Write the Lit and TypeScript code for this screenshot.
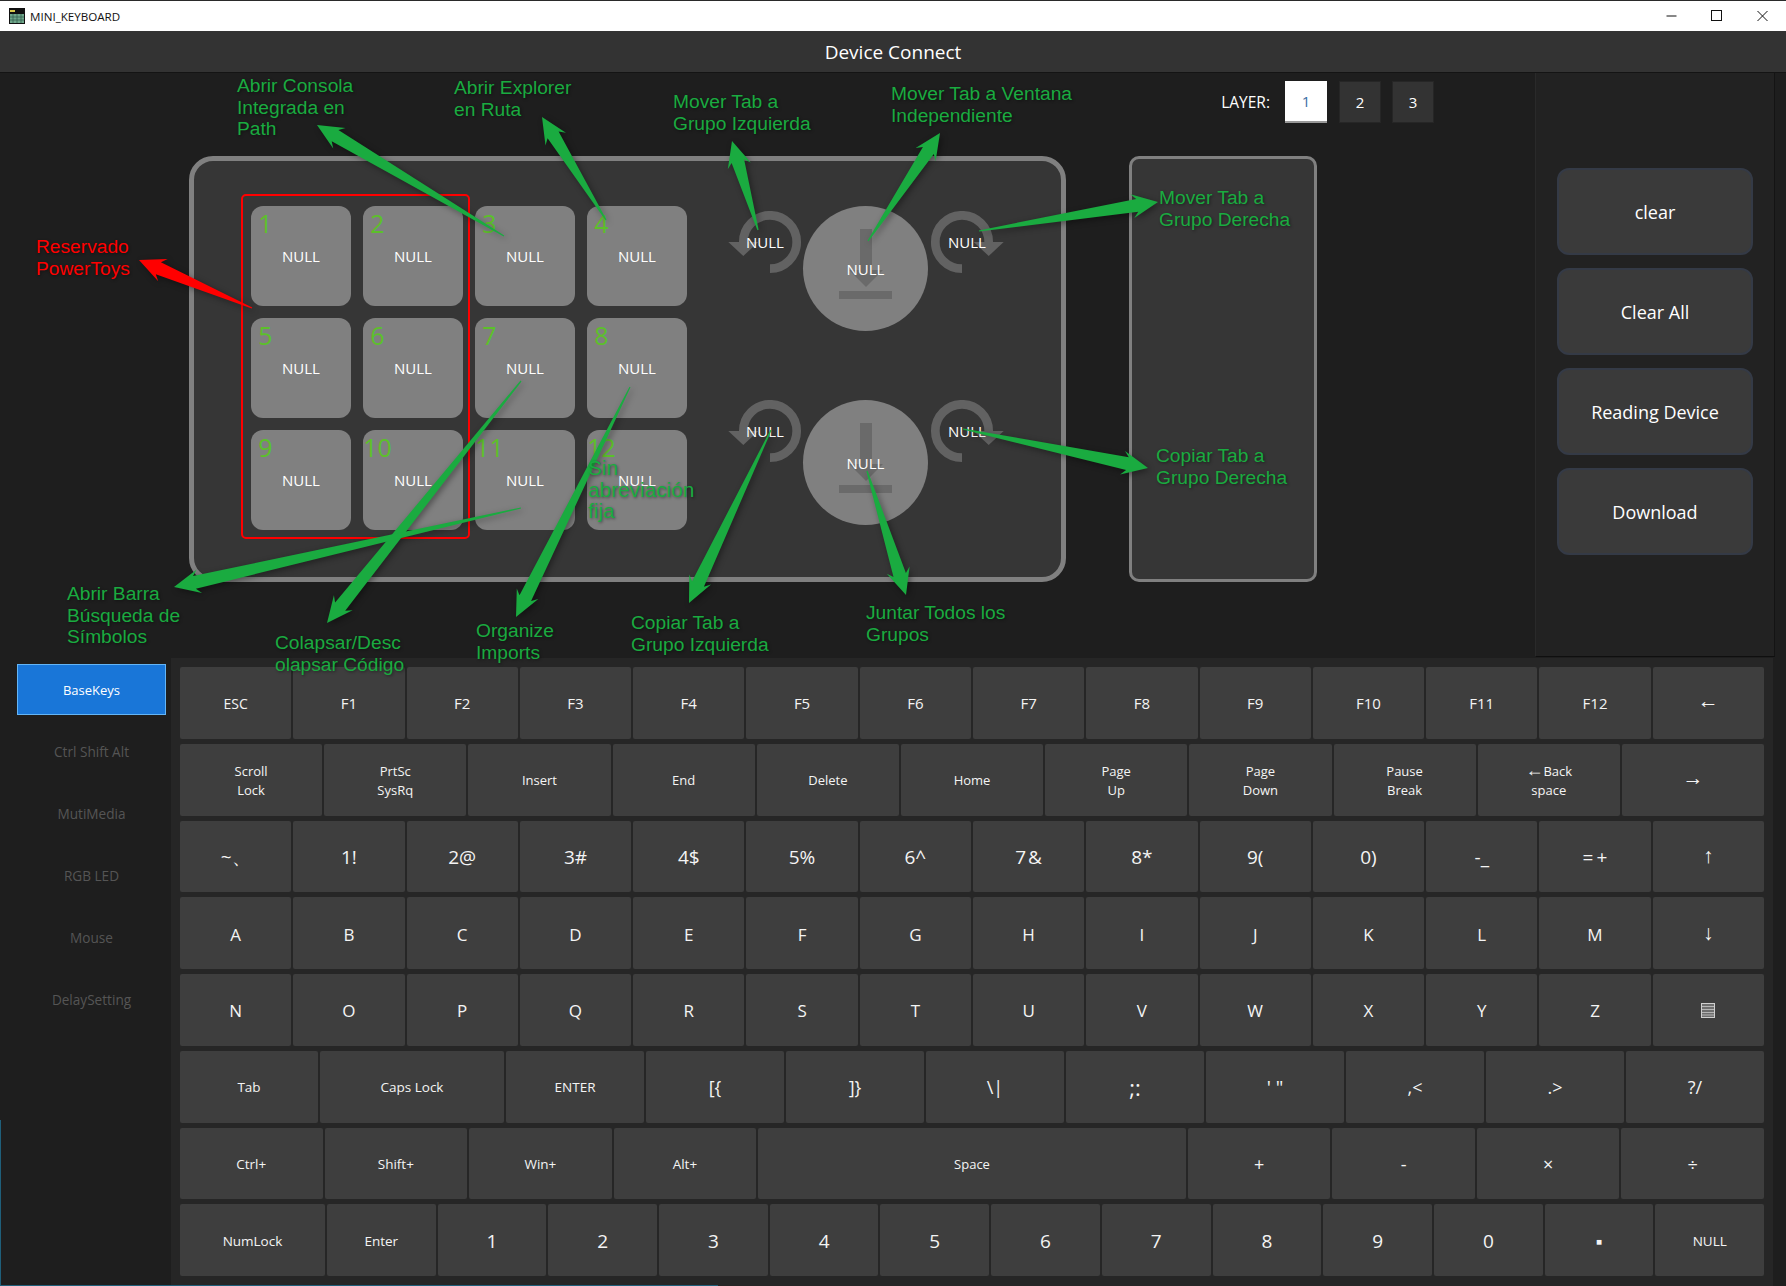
import { LitElement, html, css, svg } from "lit"
import { customElement } from "lit/decorators.js"

type Key = { t: string; s?: number; f?: number; lift?: number }

const F = (names: string[], s: number, f = 1): Key[] => names.map((t) => ({ t, s, f }))

const ROWS: Key[][] = [
  [{ t: "ESC", s: 14 }, ...F(["F1", "F2", "F3", "F4", "F5", "F6", "F7", "F8", "F9", "F10", "F11", "F12"], 15), { t: "←", s: 21, lift: 5 }],
  [
    ...F(["Scroll\nLock", "PrtSc\nSysRq", "Insert", "End", "Delete", "Home", "Page\nUp", "Page\nDown", "Pause\nBreak", "←Back\nspace"], 13),
    { t: "→", s: 21, lift: 5 },
  ],
  [
    ...F(["~、", "1!", "2@", "3#", "4$", "5%", "6^", "7\u200a&", "8*", "9(", "0)", "-_", "=\u2009+"], 19),
    { t: "↑", s: 21, lift: 1 },
  ],
  [...F(["A", "B", "C", "D", "E", "F", "G", "H", "I", "J", "K", "L", "M"], 17), { t: "↓", s: 21, lift: 1 }],
  F(["N", "O", "P", "Q", "R", "S", "T", "U", "V", "W", "X", "Y", "Z", "menu"], 17),
  [
    { t: "Tab", s: 13.5, f: 3 },
    { t: "Caps Lock", s: 13.5, f: 4 },
    { t: "ENTER", s: 13.5, f: 3 },
    ...F(["[{", "]}", "\\|"], 18, 3),
    { t: ";:", s: 22, f: 3 },
    { t: "' \"", s: 19, f: 3 },
    ...F([",<", ".>", "?/"], 18, 3),
  ],
  [...F(["Ctrl+", "Shift+", "Win+", "Alt+"], 13.5), { t: "Space", s: 13, f: 3 }, ...F(["+", "-", "×", "÷"], 18)],
  [
    { t: "NumLock", s: 13.5, f: 4 },
    { t: "Enter", s: 13.5, f: 3 },
    ...F(["1", "2", "3", "4", "5", "6", "7", "8", "9", "0", "▪"], 19, 3),
    { t: "NULL", s: 13.5, f: 3 },
  ],
]

const TABS = ["Ctrl Shift Alt", "MutiMedia", "RGB LED", "Mouse", "DelaySetting"]
const ACTIONS = ["clear", "Clear All", "Reading Device", "Download"]

// callouts drawn on top of the screenshot: x, y of the first line's centre
const NOTES: { x: number; y: number; lines: string[]; red?: boolean; big?: boolean }[] = [
  { x: 237, y: 86, lines: ["Abrir Consola", "Integrada en", "Path"] },
  { x: 454, y: 88, lines: ["Abrir Explorer", "en Ruta"] },
  { x: 673, y: 102, lines: ["Mover Tab a", "Grupo Izquierda"] },
  { x: 891, y: 94, lines: ["Mover Tab a Ventana", "Independiente"] },
  { x: 1159, y: 198, lines: ["Mover Tab a", "Grupo Derecha"] },
  { x: 36, y: 247, lines: ["Reservado", "PowerToys"], red: true },
  { x: 67, y: 594, lines: ["Abrir Barra", "Búsqueda de", "Símbolos"] },
  { x: 275, y: 643, lines: ["Colapsar/Desc", "olapsar Código"] },
  { x: 476, y: 631, lines: ["Organize", "Imports"] },
  { x: 631, y: 623, lines: ["Copiar Tab a", "Grupo Izquierda"] },
  { x: 866, y: 613, lines: ["Juntar Todos los", "Grupos"] },
  { x: 1156, y: 456, lines: ["Copiar Tab a", "Grupo Derecha"] },
  { x: 588, y: 468, lines: ["Sin", "abreviación", "fija"], big: true },
]

// tail x, tail y, tip x, tip y
const ARROWS: { p: number[]; red?: boolean }[] = [
  { p: [252, 308, 139, 260], red: true },
  { p: [504, 236, 317, 125] },
  { p: [606, 220, 542, 117] },
  { p: [758, 230, 732, 141] },
  { p: [868, 241, 940, 133] },
  { p: [979, 231, 1158, 202] },
  { p: [963, 429, 1148, 468] },
  { p: [867, 471, 906, 595] },
  { p: [771, 430, 689, 603] },
  { p: [630, 387, 516, 617] },
  { p: [521, 381, 327, 623] },
  { p: [521, 508, 174, 587] },
]

function arrowPoints([x1, y1, x2, y2]: number[]) {
  const len = Math.hypot(x2 - x1, y2 - y1)
  const ux = (x2 - x1) / len
  const uy = (y2 - y1) / len
  const at = (along: number, side: number) =>
    `${(x1 + ux * along - uy * side).toFixed(1)},${(y1 + uy * along + ux * side).toFixed(1)}`
  const head = 26
  return [
    at(0, 0.6),
    at(len - head + 5, 6.5),
    at(len - head, 12),
    at(len, 0),
    at(len - head, -12),
    at(len - head + 5, -6.5),
    at(0, -0.6),
  ].join(" ")
}

@customElement("app-root")
export class AppRoot extends LitElement {
  static styles = css`
    :host {
      display: block;
      position: relative;
      width: 1786px;
      height: 1286px;
      overflow: hidden;
      background: #1e1e1e;
      color: #fff;
      font-family: "Open Sans", "Noto Sans", sans-serif;
    }

    .titlebar {
      height: 30px;
      border-top: 1px solid #2a2a2a;
      background: #fff;
      color: #111;
      display: flex;
      align-items: center;
      padding-left: 9px;
      font-size: 11.6px;
    }
    .titlebar .app-icon {
      margin-right: 5px;
    }
    .winbtns {
      margin-left: auto;
      display: flex;
    }
    .winbtns svg {
      width: 45px;
      height: 30px;
      display: block;
    }

    .header {
      height: 41px;
      border-bottom: 1px solid #141414;
      background: #333;
      display: flex;
      align-items: center;
      justify-content: center;
      font-size: 19px;
    }

    .top {
      height: 585px;
      display: flex;
    }
    .stage {
      width: 1535px;
      box-sizing: border-box;
      padding: 8px 101px 0 189px;
    }
    .layers {
      height: 42px;
      display: flex;
      justify-content: flex-end;
      align-items: center;
      gap: 11px;
      font-size: 15px;
    }
    .layers .label {
      margin-right: 4px;
      font-size: 15.5px;
    }
    .layer {
      width: 42px;
      height: 42px;
      box-sizing: border-box;
      background: #333;
      border: 1px solid #262626;
      display: flex;
      align-items: center;
      justify-content: center;
    }
    .layer.on {
      background: #fff;
      border: none;
      border-bottom: 2px solid #999;
      color: #3a6ea5;
      margin-right: 1px;
    }

    .panels {
      margin-top: 33px;
      display: flex;
      gap: 63px;
      height: 426px;
    }
    .board {
      width: 877px;
      box-sizing: border-box;
      background: #363636;
      border: 5px solid #808080;
      border-radius: 24px;
      padding: 45px 0 0 57px;
      display: flex;
      gap: 41px;
    }
    .pad {
      position: relative;
      display: grid;
      grid-template-columns: repeat(4, 100px);
      grid-auto-rows: 100px;
      gap: 12px;
      align-self: flex-start;
    }
    .reserved {
      position: absolute;
      left: -10px;
      top: -12px;
      width: 229px;
      height: 345px;
      box-sizing: border-box;
      border: 2px solid #f00;
      border-radius: 5px;
    }
    .padkey {
      position: relative;
      background: #808080;
      border-radius: 12px;
      display: flex;
      align-items: center;
      justify-content: center;
      font-size: 15px;
    }
    .padkey .num {
      position: absolute;
      left: 0;
      top: 0;
      width: 29px;
      text-align: center;
      font-size: 25px;
      color: #5cc02a;
      line-height: 34px;
    }

    .knobs {
      display: flex;
      flex-direction: column;
      gap: 69px;
    }
    .knobrow {
      display: flex;
      align-items: flex-start;
    }
    .ring {
      position: relative;
      width: 75px;
      height: 66px;
      margin-top: 5px;
      font-size: 15px;
    }
    .knobrow:last-child .ring {
      margin-top: 0;
    }
    .ring svg {
      display: block;
    }
    .ring.cw {
      width: 76px;
    }
    .ring.cw svg {
      transform: scaleX(-1);
    }
    .ring span {
      position: absolute;
      left: 37px;
      top: 31px;
      transform: translate(-50%, -50%);
    }
    .ring.cw span {
      left: 39px;
    }
    .disc {
      position: relative;
      width: 125px;
      height: 125px;
      border-radius: 50%;
      background: #808080;
      display: flex;
      align-items: center;
      justify-content: center;
      font-size: 15px;
    }
    .disc svg {
      position: absolute;
      inset: 0;
    }
    .disc span {
      position: relative;
    }

    .sidebox {
      width: 188px;
      box-sizing: border-box;
      background: #363636;
      border: 3px solid #808080;
      border-radius: 10px;
    }

    .actions {
      width: 240px;
      height: 584px;
      box-sizing: border-box;
      background: #222;
      border-left: 1px solid #2a2a2a;
      border-right: 1px solid #141414;
      border-bottom: 1px solid #0f0f0f;
      padding: 95px 21px 0;
      display: flex;
      flex-direction: column;
      gap: 13px;
    }
    .action {
      height: 87px;
      box-sizing: border-box;
      background: #3a3a3a;
      border: 2px solid #343a46;
      border-radius: 12px;
      display: flex;
      align-items: center;
      justify-content: center;
      font-size: 18px;
    }

    .bottom {
      display: flex;
      height: 628px;
    }
    .tabs {
      width: 171px;
      box-sizing: border-box;
      padding: 6px 5px 0 17px;
      display: flex;
      flex-direction: column;
      gap: 11px;
    }
    .tab {
      height: 51px;
      display: flex;
      align-items: center;
      justify-content: center;
      font-size: 13.6px;
      color: #555;
    }
    .tab.on {
      box-sizing: border-box;
      background: #1976d8;
      border: 1px solid #64b5f6;
      color: #fff;
      font-size: 13px;
    }
    .keyboard {
      width: 1602px;
      box-sizing: border-box;
      background: #262626;
      padding: 9px 9px 10px;
      display: grid;
      grid-template-rows: repeat(8, 1fr);
      gap: 5px;
    }
    .row {
      display: flex;
      gap: 2px;
    }
    .key {
      flex-basis: 0;
      box-sizing: border-box;
      padding-top: 2px;
      background: #3e3e3e;
      border-radius: 2px;
      display: flex;
      align-items: center;
      justify-content: center;
      text-align: center;
      line-height: 19px;
      white-space: pre-line;
      color: #f4f4f4;
    }
    .key .wide {
      font-size: 18px;
      line-height: 15px;
    }

    .edge {
      position: absolute;
      left: 0;
      background: #1f5f7a;
    }
    .edge.left {
      top: 1120px;
      width: 1px;
      height: 166px;
    }
    .edge.under {
      bottom: 0;
      width: 718px;
      height: 1px;
    }

    .notes {
      position: absolute;
      inset: 0;
      pointer-events: none;
    }
    .notes svg {
      position: absolute;
      inset: 0;
      filter: drop-shadow(2px 2px 3px rgba(0, 0, 0, 0.4));
    }
    .note {
      position: absolute;
      font-family: "Liberation Sans", Arial, sans-serif;
      font-size: 19.2px;
      line-height: 21.5px;
      white-space: nowrap;
      color: #1aab40;
      text-shadow: 1px 1px 3px rgba(0, 0, 0, 0.45);
    }
    .note.big {
      font-size: 20.8px;
    }
    .note.red {
      color: #f00;
    }
  `

  private ring(cw: boolean, label: string) {
    return html`<div class="ring ${cw ? "cw" : ""}">
      <svg width="76" height="66" viewBox="0 0 76 66">
        <path d="M42 57.7A26.7 26.7 0 1 0 15.3 31" fill="none" stroke="#626262" stroke-width="8.7" />
        <path d="M.3 31H30.3L15.3 45Z" fill="#626262" />
      </svg>
      <span>${label}</span>
    </div>`
  }

  private disc() {
    return html`<div class="disc">
      <svg width="125" height="125" viewBox="0 0 125 125">
        <path d="M57 23H69V64H80L63 81L46 64H57Z" fill="#6a6a6a" />
        <rect x="36" y="85" width="53" height="8" fill="#6a6a6a" />
      </svg>
      <span>NULL</span>
    </div>`
  }

  private keyLabel(k: Key) {
    if (k.t === "←Back\nspace") {
      return html`<div><span class="wide">←</span>Back<br />space</div>`
    }
    if (k.t !== "menu") return k.t
    return html`<svg width="14" height="15" viewBox="0 0 14 15">
      <rect x=".5" y=".5" width="13" height="14" fill="#6e6e6e" stroke="#cfcfcf" />
      <path d="M1 3.5H13M1 6.5H13M1 9.5H13M1 12H13" stroke="#b5b5b5" />
    </svg>`
  }

  render() {
    return html`
      <div class="titlebar">
        <svg class="app-icon" width="16" height="16" viewBox="0 0 16 16">
          <rect width="16" height="16" fill="#111" />
          <rect x="1" y="2" width="5" height="2" fill="#d8c94a" />
          <rect x="1" y="6" width="14" height="9" fill="#6fa68a" />
          <path d="M1 9H15M1 12H15M4 6V15M8 6V15M12 6V15" stroke="#2f5a47" stroke-width=".7" />
        </svg>
        MINI_KEYBOARD
        <div class="winbtns">
          <svg viewBox="0 0 45 30"><path d="M15.5 15H25.5" stroke="#111" /></svg>
          <svg viewBox="0 0 45 30"><rect x="15.5" y="9.5" width="10" height="10" fill="none" stroke="#111" /></svg>
          <svg viewBox="0 0 45 30"><path d="M16.5 10L26.5 20M26.5 10L16.5 20" stroke="#111" /></svg>
        </div>
      </div>
      <div class="header">Device Connect</div>

      <div class="top">
        <div class="stage">
          <div class="layers">
            <span class="label">LAYER:</span>
            <div class="layer on">1</div>
            <div class="layer">2</div>
            <div class="layer">3</div>
          </div>
          <div class="panels">
            <div class="board">
              <div class="pad">
                ${Array.from(
                  { length: 12 },
                  (_, i) => html`<div class="padkey"><span class="num">${i + 1}</span>NULL</div>`
                )}
                <div class="reserved"></div>
              </div>
              <div class="knobs">
                ${[0, 1].map(
                  () => html`<div class="knobrow">
                    ${this.ring(false, "NULL")} ${this.disc()} ${this.ring(true, "NULL")}
                  </div>`
                )}
              </div>
            </div>
            <div class="sidebox"></div>
          </div>
        </div>
        <div class="actions">
          ${ACTIONS.map((a) => html`<div class="action">${a}</div>`)}
        </div>
      </div>

      <div class="bottom">
        <div class="tabs">
          <div class="tab on">BaseKeys</div>
          ${TABS.map((t) => html`<div class="tab">${t}</div>`)}
        </div>
        <div class="keyboard">
          ${ROWS.map(
            (row) => html`<div class="row">
              ${row.map(
                (k) =>
                  html`<div
                    class="key"
                    style="flex-grow:${k.f ?? 1};font-size:${k.s}px;${k.lift ? `padding:0 0 ${k.lift}px` : ""}"
                  >
                    ${this.keyLabel(k)}
                  </div>`
              )}
            </div>`
          )}
        </div>
      </div>

      <div class="edge left"></div>
      <div class="edge under"></div>

      <div class="notes">
        <svg width="1786" height="1286" viewBox="0 0 1786 1286">
          ${ARROWS.map(
            (a) => svg`<polygon points=${arrowPoints(a.p)} fill=${a.red ? "#f00" : "#1aab40"} />`
          )}
        </svg>
        ${NOTES.map(
          (n) => html`<div class="note ${n.red ? "red" : ""} ${n.big ? "big" : ""}" style="left:${n.x}px;top:${n.y - 11}px">
            ${n.lines.map((l) => html`${l}<br />`)}
          </div>`
        )}
      </div>
    `
  }
}

declare global {
  interface HTMLElementTagNameMap {
    "app-root": AppRoot
  }
}
